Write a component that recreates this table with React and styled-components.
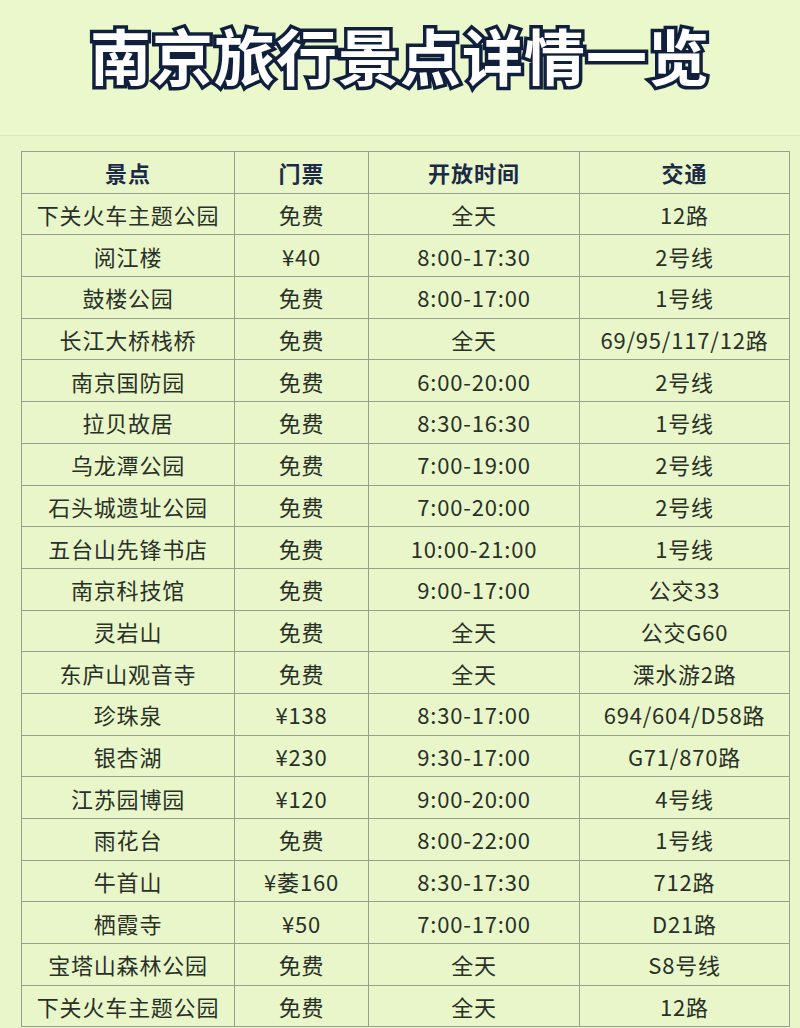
import React from "react";
import styled, { createGlobalStyle } from "styled-components";

const GlobalStyle = createGlobalStyle`
  html, body {
    margin: 0;
    padding: 0;
    background: #e9f6c9;
  }
  body {
    font-family: "Noto Sans CJK SC", "Noto Sans", sans-serif;
  }
`;

const Page = styled.div`
  width: 800px;
  height: 1028px;
  overflow: hidden;
  background: #e9f6c9;
`;

const Header = styled.header`
  height: 136px;
  display: flex;
  justify-content: center;
  padding-top: 15px;
  box-sizing: border-box;
  border-bottom: 1px solid #dde9bd;
  background: #ebf8cc;
`;

const Title = styled.h1`
  margin: 0;
  font-size: 61px;
  line-height: 80px;
  font-weight: 700;
  letter-spacing: 1px;
  color: #ffffff;
  -webkit-text-stroke: 7px #10203c;
  paint-order: stroke fill;
`;

const TableWrap = styled.div`
  padding: 15px 0 0 21px;
`;

const Table = styled.table`
  border-collapse: collapse;
  table-layout: fixed;
  width: 768px;
`;

const Col = styled.col`
  width: ${(p) => p.$w}px;
`;

const Th = styled.th`
  height: 40.7px;
  padding: 0;
  border: 1px solid #97a08c;
  font-size: 22px;
  font-weight: 700;
  color: #1b2a46;
  letter-spacing: 1px;
  text-align: center;
`;

const Td = styled.td`
  height: 40.7px;
  padding: 0;
  border: 1px solid #97a08c;
  font-size: 22px;
  font-weight: 400;
  color: #283028;
  letter-spacing: 0.8px;
  text-align: center;
  white-space: nowrap;
`;

const cols = [213, 134, 211, 210];
const heads = ["景点", "门票", "开放时间", "交通"];

const rows = [
  ["下关火车主题公园", "免费", "全天", "12路"],
  ["阅江楼", "¥40", "8:00-17:30", "2号线"],
  ["鼓楼公园", "免费", "8:00-17:00", "1号线"],
  ["长江大桥栈桥", "免费", "全天", "69/95/117/12路"],
  ["南京国防园", "免费", "6:00-20:00", "2号线"],
  ["拉贝故居", "免费", "8:30-16:30", "1号线"],
  ["乌龙潭公园", "免费", "7:00-19:00", "2号线"],
  ["石头城遗址公园", "免费", "7:00-20:00", "2号线"],
  ["五台山先锋书店", "免费", "10:00-21:00", "1号线"],
  ["南京科技馆", "免费", "9:00-17:00", "公交33"],
  ["灵岩山", "免费", "全天", "公交G60"],
  ["东庐山观音寺", "免费", "全天", "溧水游2路"],
  ["珍珠泉", "¥138", "8:30-17:00", "694/604/D58路"],
  ["银杏湖", "¥230", "9:30-17:00", "G71/870路"],
  ["江苏园博园", "¥120", "9:00-20:00", "4号线"],
  ["雨花台", "免费", "8:00-22:00", "1号线"],
  ["牛首山", "¥萎160", "8:30-17:30", "712路"],
  ["栖霞寺", "¥50", "7:00-17:00", "D21路"],
  ["宝塔山森林公园", "免费", "全天", "S8号线"],
  ["下关火车主题公园", "免费", "全天", "12路"],
];

export default function App() {
  return (
    <Page>
      <GlobalStyle />
      <Header>
        <Title>南京旅行景点详情一览</Title>
      </Header>
      <TableWrap>
        <Table>
          <colgroup>
            {cols.map((w, i) => (
              <Col key={i} $w={w} />
            ))}
          </colgroup>
          <thead>
            <tr>
              {heads.map((h) => (
                <Th key={h}>{h}</Th>
              ))}
            </tr>
          </thead>
          <tbody>
            {rows.map((r, i) => (
              <tr key={i}>
                {r.map((c, j) => (
                  <Td key={j}>{c}</Td>
                ))}
              </tr>
            ))}
          </tbody>
        </Table>
      </TableWrap>
    </Page>
  );
}
